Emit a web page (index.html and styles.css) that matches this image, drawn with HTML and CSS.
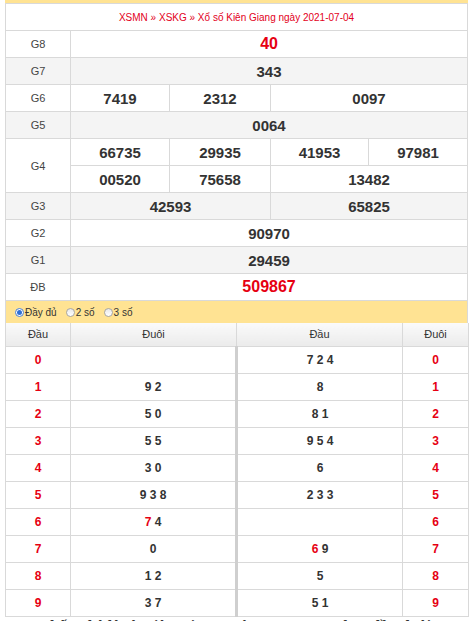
FILE: index.html
```html
<!DOCTYPE html>
<html lang="vi">
<head>
<meta charset="utf-8">
<link rel="stylesheet" href="styles.css">
</head>
<body>
<div class="wrap">
  <div class="topbar"></div>
  <table class="kq">
    <colgroup>
      <col class="c-lbl"><col class="c-n1"><col class="c-n2"><col class="c-n3"><col class="c-n4">
    </colgroup>
    <tr><td colspan="5" class="title">XSMN » XSKG » Xổ số Kiên Giang ngày 2021-07-04</td></tr>
    <tr><td class="lbl">G8</td><td colspan="4" class="num big red">40</td></tr>
    <tr class="alt"><td class="lbl">G7</td><td colspan="4" class="num">343</td></tr>
    <tr><td class="lbl">G6</td><td class="num">7419</td><td class="num">2312</td><td colspan="2" class="num">0097</td></tr>
    <tr class="alt"><td class="lbl">G5</td><td colspan="4" class="num">0064</td></tr>
    <tr><td class="lbl" rowspan="2">G4</td><td class="num">66735</td><td class="num">29935</td><td class="num">41953</td><td class="num">97981</td></tr>
    <tr><td class="num">00520</td><td class="num">75658</td><td colspan="2" class="num">13482</td></tr>
    <tr class="alt"><td class="lbl">G3</td><td colspan="2" class="num">42593</td><td colspan="2" class="num">65825</td></tr>
    <tr><td class="lbl">G2</td><td colspan="4" class="num">90970</td></tr>
    <tr class="alt"><td class="lbl">G1</td><td colspan="4" class="num">29459</td></tr>
    <tr><td class="lbl">ĐB</td><td colspan="4" class="num big red">509867</td></tr>
  </table>
  <div class="opts">
    <label class="opt"><span class="radio on"></span>Đầy đủ</label>
    <label class="opt"><span class="radio"></span>2 số</label>
    <label class="opt"><span class="radio"></span>3 số</label>
  </div>
  <table class="loto">
    <colgroup>
      <col class="l-d"><col class="l-t"><col class="r-d"><col class="r-t">
    </colgroup>
    <tr class="head"><th>Đầu</th><th class="mid">Đuôi</th><th>Đầu</th><th>Đuôi</th></tr>
    <tr><td class="k">0</td><td class="mid"></td><td>7 2 4</td><td class="k">0</td></tr>
    <tr><td class="k">1</td><td class="mid">9 2</td><td>8</td><td class="k">1</td></tr>
    <tr><td class="k">2</td><td class="mid">5 0</td><td>8 1</td><td class="k">2</td></tr>
    <tr><td class="k">3</td><td class="mid">5 5</td><td>9 5 4</td><td class="k">3</td></tr>
    <tr><td class="k">4</td><td class="mid">3 0</td><td>6</td><td class="k">4</td></tr>
    <tr><td class="k">5</td><td class="mid">9 3 8</td><td>2 3 3</td><td class="k">5</td></tr>
    <tr><td class="k">6</td><td class="mid"><span class="hl">7</span> 4</td><td></td><td class="k">6</td></tr>
    <tr><td class="k">7</td><td class="mid">0</td><td><span class="hl">6</span> 9</td><td class="k">7</td></tr>
    <tr><td class="k">8</td><td class="mid">1 2</td><td>5</td><td class="k">8</td></tr>
    <tr><td class="k">9</td><td class="mid">3 7</td><td>5 1</td><td class="k">9</td></tr>
  </table>
  <p class="note">Bảng thống kê lô tô Kiên Giang ngày 04/07/2021 theo đầu đuôi</p>
</div>
</body>
</html>
```

FILE: styles.css
```css
html, body {
  margin: 0;
  padding: 0;
  background: #fff;
}
body {
  font-family: "Liberation Sans", Arial, sans-serif;
  color: #333;
}
.wrap {
  width: 463px;
  margin-left: 5px;
}
.topbar {
  height: 3px;
  background: #ffe393;
}
table {
  width: 463px;
  border-collapse: collapse;
  table-layout: fixed;
}
td, th {
  border: 1px solid #d9d9d9;
  padding: 0;
  text-align: center;
  vertical-align: middle;
}
.kq tr {
  height: 27px;
}
.c-lbl { width: 65px; }
.c-n1 { width: 99px; }
.c-n2 { width: 101px; }
.c-n3 { width: 98px; }
.c-n4 { width: 99px; }
.title {
  font-size: 10px;
  color: #e3001b;
  height: 26px;
}
.lbl {
  font-size: 11px;
  color: #444;
}
.num {
  font-size: 15px;
  font-weight: bold;
  color: #333;
}
.num.big {
  font-size: 16px;
}
.red {
  color: #e60012;
}
.alt td {
  background: #f4f4f4;
}
.opts {
  height: 22px;
  background: #ffe393;
  display: flex;
  align-items: center;
  gap: 9px;
  padding-left: 9px;
  border-left: 1px solid #d9d9d9;
  border-right: 1px solid #d9d9d9;
  box-sizing: border-box;
  font-size: 10px;
  color: #333;
}
.opt {
  display: flex;
  align-items: center;
  gap: 1px;
}
.radio {
  width: 7px;
  height: 7px;
  border-radius: 50%;
  border: 1px solid #a6a6a6;
  background: linear-gradient(#e8e8e8, #fff);
  position: relative;
}
.radio.on {
  border-color: #4a7fd0;
  background: #fff;
}
.radio.on::after {
  content: "";
  position: absolute;
  left: 1px;
  top: 1px;
  width: 5px;
  height: 5px;
  border-radius: 50%;
  background: #2f6fd6;
}
.l-d { width: 65px; }
.l-t { width: 166px; }
.r-d { width: 166px; }
.r-t { width: 66px; }
.loto tr {
  height: 27px;
}
.loto tr.head {
  height: 23px;
}
.loto th {
  font-size: 11px;
  font-weight: normal;
  color: #333;
  background: linear-gradient(#fafafa, #ebebeb);
  border-top: none;
  border-bottom: none;
}
.loto td {
  font-size: 12px;
  font-weight: bold;
  color: #333;
}
.loto td.mid {
  border-right: 3px solid #cfcfcf;
}
.loto td.k, .hl {
  color: #e60012;
}
.note {
  margin: 1px 0 0;
  font-family: "Liberation Serif", "Times New Roman", serif;
  font-size: 16px;
  font-weight: bold;
  color: #333;
}
```
